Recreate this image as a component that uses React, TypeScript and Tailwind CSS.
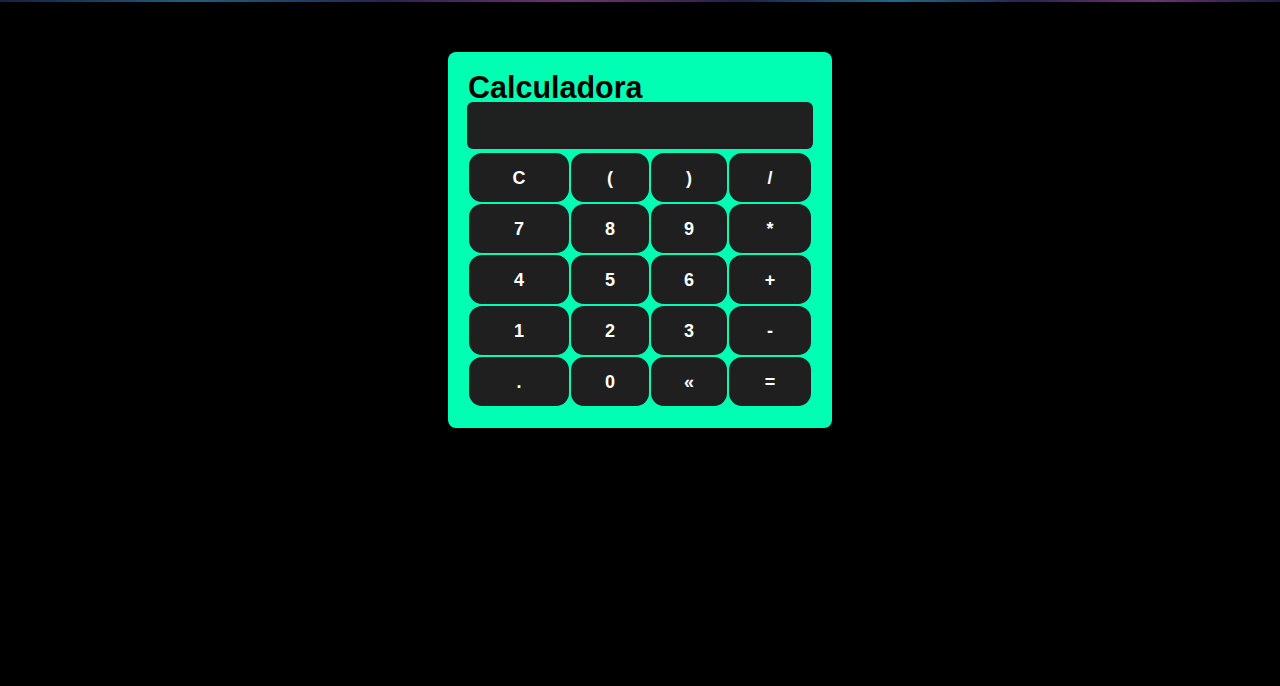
import React from "react";

const keys = [
  "C", "(", ")", "/",
  "7", "8", "9", "*",
  "4", "5", "6", "+",
  "1", "2", "3", "-",
  ".", "0", "«", "=",
];

export default function App() {
  return (
    <div className="min-h-[686px] bg-black font-['Liberation_Sans',Arial,sans-serif]">
      {/* top strip */}
      <div className="h-[2px] bg-[linear-gradient(90deg,#1b1f3a_0%,#1d5f80_15%,#2a2350_30%,#6a3570_45%,#222048_58%,#1d6a8a_70%,#2a2350_80%,#6a3570_90%,#1b1f3a_100%)]" />

      <div className="flex justify-center pt-[50px]">
        <div className="w-[384px] rounded-lg bg-[#00ffb3] px-[19px] pt-[20px] pb-[20px]">
          <h1 className="pl-[1px] text-[30.5px] font-bold leading-[30px] text-black">
            Calculadora
          </h1>
          <div className="h-[47px] rounded-md bg-[#1f2020]" />
          <div className="grid grid-cols-[100px_78px_76px_82px] gap-[2px] p-[2px] pt-[4px]">
            {keys.map((k) => (
              <button
                key={k}
                className="h-[49px] rounded-[13px] bg-[#1f1f1f] pt-[1px] text-[18px] font-bold text-white"
              >
                {k}
              </button>
            ))}
          </div>
        </div>
      </div>
    </div>
  );
}
